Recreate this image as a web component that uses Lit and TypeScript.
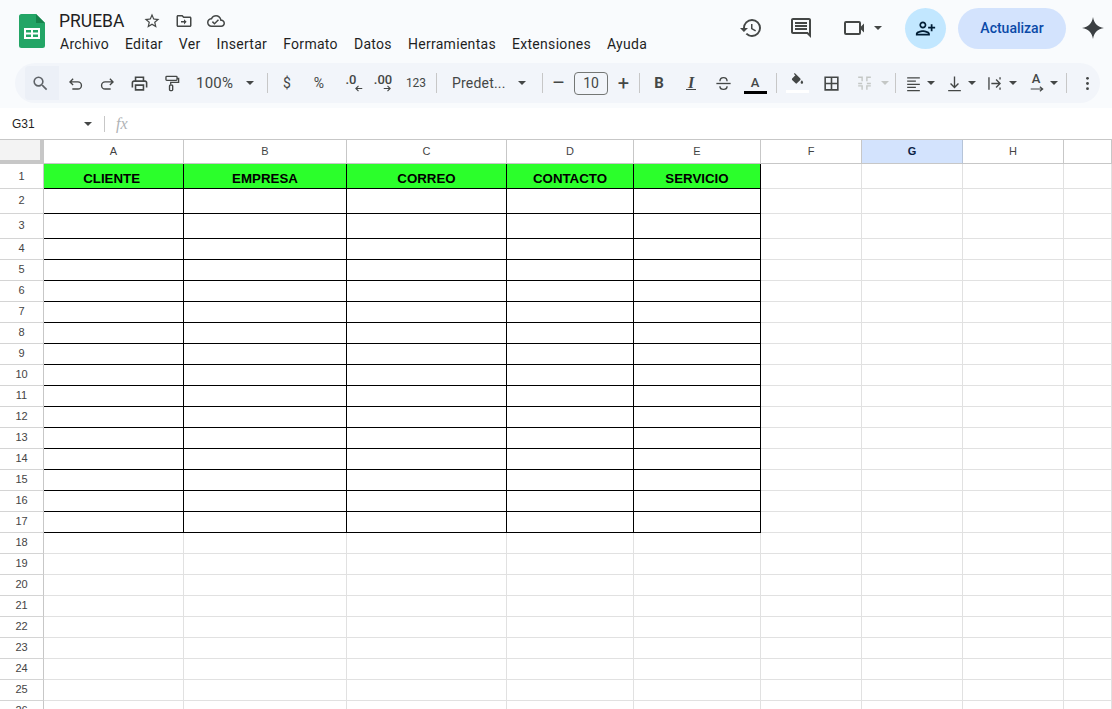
import { LitElement, html, css, svg } from "lit";
import { customElement } from "lit/decorators.js";

const p = (d: string, cls = "ic", vb = "0 0 24 24") =>
  html`<svg class=${cls} viewBox=${vb}><path d=${d}></path></svg>`;
const s = (inner: unknown, cls = "ic st") =>
  html`<svg class=${cls} viewBox="0 0 24 24">${inner}</svg>`;

const I = {
  star: "M22 9.24l-7.19-.62L12 2 9.19 8.63 2 9.24l5.46 4.73L5.82 21 12 17.27 18.18 21l-1.63-7.03L22 9.24zM12 15.4l-3.76 2.27 1-4.28-3.32-2.88 4.38-.38L12 6.1l1.71 4.04 4.38.38-3.32 2.88 1 4.28L12 15.4z",
  folder: "M20 6h-8l-2-2H4c-1.1 0-2 .9-2 2v12c0 1.1.9 2 2 2h16c1.1 0 2-.9 2-2V8c0-1.1-.9-2-2-2zm0 12H4V6h5.17l2 2H20v10zM12 12H8v2h4v2.5l3.5-3.5L12 9.5z",
  cloud: "M19.35 10.04C18.67 6.59 15.64 4 12 4 9.11 4 6.6 5.64 5.35 8.04 2.34 8.36 0 10.91 0 14c0 3.31 2.69 6 6 6h13c2.76 0 5-2.24 5-5 0-2.64-2.05-4.78-4.65-4.96zM19 18H6c-2.21 0-4-1.79-4-4 0-2.05 1.53-3.76 3.56-3.97l1.07-.11.5-.95C8.08 7.14 9.94 6 12 6c2.62 0 4.88 1.86 5.39 4.43l.3 1.5 1.53.11c1.56.1 2.78 1.41 2.78 2.96 0 1.65-1.35 3-3 3zm-9-3.82l-2.09-2.09L6.5 13.5 10 17l6.01-6.01-1.41-1.41z",
  history: "M13 3a9 9 0 0 0-9 9H1l3.89 3.89.07.14L9 12H6c0-3.87 3.13-7 7-7s7 3.13 7 7-3.13 7-7 7c-1.93 0-3.68-.79-4.94-2.06l-1.42 1.42A8.954 8.954 0 0 0 13 21a9 9 0 0 0 0-18zm-1 5v5l4.28 2.54.72-1.21-3.5-2.08V8H12z",
  comment: "M20 17.17L18.83 16H4V4h16v13.17zM20 2H4c-1.1 0-2 .9-2 2v12c0 1.1.9 2 2 2h14l4 4V4c0-1.1-.9-2-2-2zM6 12h12v2H6zM6 9h12v2H6zM6 6h12v2H6z",
  video: "M4 5h13a2 2 0 0 1 2 2v3.500l3-3v9l-3-3V17a2 2 0 0 1-2 2H4a2 2 0 0 1-2-2V7a2 2 0 0 1 2-2zm0 2v10h13V7z",
  person: "M15 12c2.21 0 4-1.79 4-4s-1.79-4-4-4-4 1.79-4 4 1.79 4 4 4zm0-6c1.1 0 2 .9 2 2s-.9 2-2 2-2-.9-2-2 .9-2 2-2zm0 8c-2.67 0-8 1.34-8 4v2h16v-2c0-2.66-5.33-4-8-4zm-6 4c.22-.72 3.31-2 6-2 2.7 0 5.8 1.29 6 2H9zm-3-3v-3h3v-2H6V7H4v3H1v2h3v3h2z",
  spark: "M12 1C13 7.500 16.500 11 23 12 16.500 13 13 16.500 12 23 11 16.500 7.500 13 1 12 7.500 11 11 7.500 12 1z",
  search: "M15.5 14h-.79l-.28-.27A6.471 6.471 0 0 0 16 9.5 6.5 6.5 0 1 0 9.5 16c1.61 0 3.09-.59 4.23-1.57l.27.28v.79l5 4.99L20.49 19l-4.99-5zm-6 0C7.01 14 5 11.99 5 9.5S7.01 5 9.5 5 14 7.01 14 9.5 11.99 14 9.5 14z",
  print: "M19 8h-1V3H6v5H5c-1.66 0-3 1.34-3 3v6h4v4h12v-4h4v-6c0-1.66-1.34-3-3-3zM8 5h8v3H8V5zm8 14H8v-4h8v4zm2-2v-4H6v4H4v-6c0-.55.45-1 1-1h14c.55 0 1 .45 1 1v6h-2z",
  borders: "M3 3v18h18V3H3zm8 16H5v-6h6v6zm0-8H5V5h6v6zm8 8h-6v-6h6v6zm0-8h-6V5h6v6z",
  fill: "M16.56 8.94L7.62 0 6.21 1.41l2.38 2.38-5.15 5.15c-.59.59-.59 1.54 0 2.12l5.5 5.5c.29.29.68.44 1.06.44s.77-.15 1.06-.44l5.5-5.5c.59-.58.59-1.53 0-2.12zM19 11.5s-2 2.17-2 3.5c0 1.1.9 2 2 2s2-.9 2-2c0-1.33-2-3.5-2-3.5z",
};

const caret = html`<span class="caret"></span>`;

const cols = ["A", "B", "C", "D", "E", "F", "G", "H", ""];
const heads = ["CLIENTE\u00a0", "EMPRESA", "CORREO", "CONTACTO", "SERVICIO"];
const rows = Array.from({ length: 26 }, (_, i) => i + 1);

@customElement("app-root")
export class AppRoot extends LitElement {
  static styles = css`
    :host { display: flex; flex-direction: column; width: 1112px; height: 709px; overflow: hidden; background: #fff; font-family: Roboto, "Liberation Sans", sans-serif; color: #1f1f1f; }
    svg { display: block; flex: none; }
    svg path, svg circle { fill: currentColor; }
    svg.st path, svg.st line, svg.st rect { fill: none; stroke: currentColor; stroke-width: 1.7; }
    .top { height: 108px; flex: none; background: #f9fbfd; display: flex; flex-direction: column; }
    .head { height: 63px; display: flex; align-items: flex-start; flex: none; }
    .logo { width: 26px; height: 34px; margin: 14px 14px 0 19px; flex: none; }
    .titles { padding-top: 10px; flex: 1; }
    .titlerow { display: flex; align-items: center; height: 22px; }
    .name { font-size: 17.5px; line-height: 22px; width: 77px; color: #1f1f1f; }
    .ticon { width: 32px; display: flex; justify-content: center; color: #444746; }
    .ticon svg { width: 18px; height: 18px; }
    .menu { display: flex; gap: 16px; font-size: 14px; line-height: 18px; margin-top: 3px; padding-left: 1px; letter-spacing: .3px; color: #1f1f1f; }
    .right { display: flex; align-items: center; height: 40px; margin-top: 8px; flex: none; padding-right: 7px; }
    .r1 { width: 24px; height: 24px; color: #444746; margin-right: 26px; }
    .r2 { width: 24px; height: 24px; color: #444746; margin-right: 29px; }
    .r3 { width: 24px; height: 24px; color: #444746; margin-right: 8px; }
    .right .caret { margin-right: 23px; }
    .share { width: 41px; height: 41px; border-radius: 50%; background: #c2e7ff; display: flex; align-items: center; justify-content: center; color: #001d35; margin-right: 12px; }
    .share svg { width: 21px; height: 21px; transform: scaleX(-1); }
    .upd { width: 108px; height: 41px; border-radius: 21px; background: #d3e3fd; color: #0b4aa8; font-size: 14px; font-weight: 500; display: flex; align-items: center; justify-content: center; margin-right: 15px; }
    .spark { width: 24px; height: 24px; color: #3c4043; }
    .tb { height: 40px; margin: 0 12px 0 15px; background: #f2f5fa; border-radius: 20px; display: flex; align-items: center; padding-left: 10px; color: #444746; flex: none; }
    .b { height: 40px; display: flex; align-items: center; justify-content: center; flex: none; font-size: 13px; color: #444746; }
    .b svg { width: 19px; height: 19px; }
    .w3 { width: 3px; } .w4 { width: 4px; } .w5 { width: 5px; } .w6 { width: 6px; } .w7 { width: 7px; } .w10 { width: 10px; } .w20 { width: 20px; } .w26 { width: 26px; }
    .w32 { width: 32px; } .w34 { width: 34px; }
    .ml2 { margin-left: 2px; } .ml3 { margin-left: 3px; } .ml4 { margin-left: 4px; }
    .srch { width: 34px; height: 34px; border-radius: 4px 0 0 4px; background: #ecf0f7; padding-right: 3px; box-sizing: border-box; color: #5f6368; }
    .sep { width: 1px; height: 20px; background: #c7c7c7; flex: none; }
    .zoom { width: 53px; font-size: 15px; letter-spacing: .2px; justify-content: flex-start; padding-left: 9px; box-sizing: border-box; }
    .sym { font-size: 14px; }
    .caret { width: 0; height: 0; border-left: 4px solid transparent; border-right: 4px solid transparent; border-top: 4px solid #444746; flex: none; display: block; }
    .caret.off { border-top-color: #c4c7c5; }
    .stack { display: flex; flex-direction: column; align-items: center; font-size: 13px; line-height: 12px; font-weight: 500; }
    .stack svg { width: 9px; height: 9px; margin-top: -2px; margin-left: 14px; }
    .stack.two svg { margin-left: 9px; }
    .stack.rot { line-height: 13px; margin-top: -2px; }
    .stack.rot svg { width: 14px; height: 8px; margin: 0 0 0 1px; }
    .font { width: 75px; justify-content: flex-start; padding-left: 15px; box-sizing: border-box; font-size: 14px; letter-spacing: .2px; }
    .sz { width: 34px; height: 23px; border: 1px solid #747775; border-radius: 4px; box-sizing: border-box; font-size: 14px; display: flex; align-items: center; justify-content: center; flex: none; color: #444746; }
    .big { font-size: 20px; font-weight: 400; width: 31px; }
    .n123 { font-size: 12px; }
    .bt { font: 700 15px "Roboto", sans-serif; }
    .it { font: italic 700 16px "Liberation Serif", serif; border-bottom: 1.5px solid #444746; line-height: 13px; padding: 0 2px; }
    .ca { flex-direction: column; font-size: 13px; font-weight: 500; line-height: 14px; padding-top: 3px; box-sizing: border-box; }
    .ca i { display: block; width: 23px; height: 3px; background: #000; margin-top: 1px; }
    .fl { flex-direction: column; }
    .fl i { display: block; width: 23px; height: 3px; background: #fff; margin-top: 2px; }
    .fl svg { width: 15px; height: 15px; }
    .off { color: #c4c7c5; }
    .fx { height: 31px; flex: none; display: flex; align-items: center; background: #fff; }
    .ref { font: 12px "Liberation Sans", Arial, sans-serif; margin-left: 12px; width: 72px; color: #1f1f1f; padding-top: 1px; }
    .fsep { width: 1px; height: 16px; background: #c7c7c7; margin: 0 11px 0 12px; }
    .fxt { font: italic 16px "Liberation Serif", serif; color: #b0b3b6; padding-top: 1px; }
    .grid { flex: 1; display: grid; grid-template-columns: 44px 140px 163px 160px 127px 127px 101px 101px 101px 48px; grid-template-rows: 24px 25px 25px 25px repeat(23, 21px); border-top: 1px solid #c7c7c7; font-family: "Liberation Sans", Arial, sans-serif; overflow: hidden; background: #fff; }
    .c { box-sizing: border-box; border-right: 1px solid #e1e1e1; border-bottom: 1px solid #e1e1e1; min-width: 0; }
    .corner { background: #f3f3f3; border-right: 4px solid #c7c7c7; border-bottom: 4px solid #c7c7c7; }
    .ch { border-right: 1px solid #c7c7c7; border-bottom: 1px solid #c7c7c7; font-size: 11px; display: flex; align-items: center; justify-content: center; color: #444; padding-bottom: 1px; }
    .ch.sel { background: #d3e3fd; color: #0b1f44; font-weight: 700; border-right-color: #b6c4d8; }
    .rh { border-right: 1px solid #c7c7c7; border-bottom: 1px solid #d4d4d4; font-size: 11px; display: flex; align-items: center; justify-content: center; color: #444; padding-bottom: 2px; }
    .rh.first { padding-bottom: 0; }
    .k { border-right: 1px solid #000; border-bottom: 1px solid #000; }
    .hd { background: #2bff2b; color: #000; font-size: 13.3px; font-weight: 700; display: flex; align-items: flex-end; justify-content: center; padding-bottom: 2px; line-height: 15px; }
  `;

  private cell(r: number, c: number) {
    const dark = r <= 17 && c <= 4;
    if (r === 1 && c <= 4) return html`<div class="c k hd">${heads[c]}</div>`;
    return html`<div class="c ${dark ? "k" : ""}"></div>`;
  }

  render() {
    return html`
      <div class="top">
        <div class="head">
          <svg class="logo" viewBox="0 0 26 34">
            <path d="M2.5 0H17l9 9v22.5a2.5 2.5 0 0 1-2.5 2.5h-21A2.5 2.5 0 0 1 0 31.500v-29A2.500 2.500 0 0 1 2.500 0z" style="fill:#23a566"></path>
            <path d="M17 0l9 9h-9z" style="fill:#16824b"></path>
            <path d="M5 14h16v11H5zM7 16v2.500h5V16zm7 0v2.500h5V16zM7 20.500V23h5v-2.500zm7 0V23h5v-2.500z" style="fill:#fff;fill-rule:evenodd"></path>
          </svg>
          <div class="titles">
            <div class="titlerow">
              <span class="name">PRUEBA</span>
              <span class="ticon">${p(I.star)}</span>
              <span class="ticon">${p(I.folder)}</span>
              <span class="ticon">${p(I.cloud)}</span>
            </div>
            <div class="menu">
              <span>Archivo</span><span>Editar</span><span>Ver</span><span>Insertar</span><span>Formato</span><span>Datos</span><span>Herramientas</span><span>Extensiones</span><span>Ayuda</span>
            </div>
          </div>
          <div class="right">
            ${p(I.history, "r1")}
            ${p(I.comment, "r2")}
            ${p(I.video, "r3")}
            ${caret}
            <div class="share">${p(I.person)}</div>
            <div class="upd">Actualizar</div>
            ${p(I.spark, "spark")}
          </div>
        </div>
        <div class="tb">
          <span class="b srch">${p(I.search)}</span>
          <span class="b w32">${s(svg`<path d="M9 6 5 10l4 4M5 10h10a4.500 4.500 0 0 1 0 9H8"></path>`)}</span>
          <span class="b w32">${s(svg`<path d="M15 6l4 4-4 4M19 10H9a4.500 4.500 0 0 0 0 9h7"></path>`)}</span>
          <span class="b w32">${p(I.print)}</span>
          <span class="b w32">${s(svg`<rect x="5" y="3" width="14" height="5" rx="1"></rect><path d="M19 5.500h2v5H11v3"></path><rect x="9.500" y="14" width="4" height="7" rx="1"></rect>`)}</span>
          <span class="b zoom">100%</span>
          <span class="b w20">${caret}</span>
          <span class="b w7"></span>
          <span class="sep"></span>
          <span class="b w32 ml3 sym">$</span>
          <span class="b w32 sym">%</span>
          <span class="b w32"><span class="stack">.0${s(svg`<path d="M22 12H6M12 5l-7 7 7 7" style="stroke-width:3"></path>`)}</span></span>
          <span class="b w32"><span class="stack two">.00${s(svg`<path d="M2 12h16M12 5l7 7-7 7" style="stroke-width:3"></path>`)}</span></span>
          <span class="b w34 n123">123</span>
          <span class="b w3"></span>
          <span class="sep"></span>
          <span class="b font">Predet...</span>
          <span class="b w20">${caret}</span>
          <span class="b w10"></span>
          <span class="sep"></span>
          <span class="b big">–</span>
          <span class="sz">10</span>
          <span class="b big">+</span>
          <span class="sep"></span>
          <span class="b w32 ml3"><span class="bt">B</span></span>
          <span class="b w32"><span class="it">I</span></span>
          <span class="b w32">${s(svg`<path d="M3 12h18"></path><path d="M7.500 9c0-3 2-4.500 4.500-4.500S16.500 6 16.500 9M7.500 15.500c0 2.500 2 4 4.500 4s4.500-1.500 4.500-4"></path>`)}</span>
          <span class="b w32 ca">A<i></i></span>
          <span class="b w5"></span>
          <span class="sep"></span>
          <span class="b w34 ml3 fl">${p(I.fill)}<i></i></span>
          <span class="b w34">${p(I.borders)}</span>
          <span class="b w32 off">${s(svg`<path d="M4 4h5v5M4 15h5v5M20 4h-5v5M20 15h-5v5M4 12h5M15 12h5" style="stroke-width:1.800"></path>`)}</span>
          <span class="b w10"><span class="caret off"></span></span>
          <span class="b w5"></span>
          <span class="sep"></span>
          <span class="b w26 ml4">${s(svg`<path d="M4 5h16M4 9h11M4 13h16M4 17h11M4 21h16" style="stroke-width:1.600"></path>`)}</span>
          <span class="b w10">${caret}</span>
          <span class="b w32 ml2">${s(svg`<path d="M12 3v14M7 12l5 5 5-5M4 21h16"></path>`)}</span>
          <span class="b w4">${caret}</span>
          <span class="b w32 ml4">${s(svg`<path d="M5 4v16M8 12h11M14 7l5 5-5 5M19 4v3M19 17v3"></path>`)}</span>
          <span class="b w6">${caret}</span>
          <span class="b w32 ml4"><span class="stack rot">A<svg class="st" viewBox="0 0 24 14"><path d="M1 7h21M17 3l5 4-5 4" style="stroke-width:2"></path></svg></span></span>
          <span class="b w4">${caret}</span>
          <span class="b w10"></span>
          <span class="sep"></span>
          <span class="b w34 ml3"><svg viewBox="0 0 24 24"><circle cx="12" cy="5.500" r="1.800"></circle><circle cx="12" cy="12" r="1.800"></circle><circle cx="12" cy="18.500" r="1.800"></circle></svg></span>
        </div>
      </div>
      <div class="fx">
        <span class="ref">G31</span>
        <span class="caret"></span>
        <span class="fsep"></span>
        <span class="fxt">fx</span>
      </div>
      <div class="grid">
        <div class="c corner"></div>
        ${cols.map((n, i) => html`<div class="c ch ${i === 6 ? "sel" : ""}">${n}</div>`)}
        ${rows.map(
          (r) => html`
            <div class="c rh ${r === 1 ? "first" : ""}">${r}</div>
            ${cols.map((_, c) => this.cell(r, c))}
          `
        )}
      </div>
    `;
  }
}
